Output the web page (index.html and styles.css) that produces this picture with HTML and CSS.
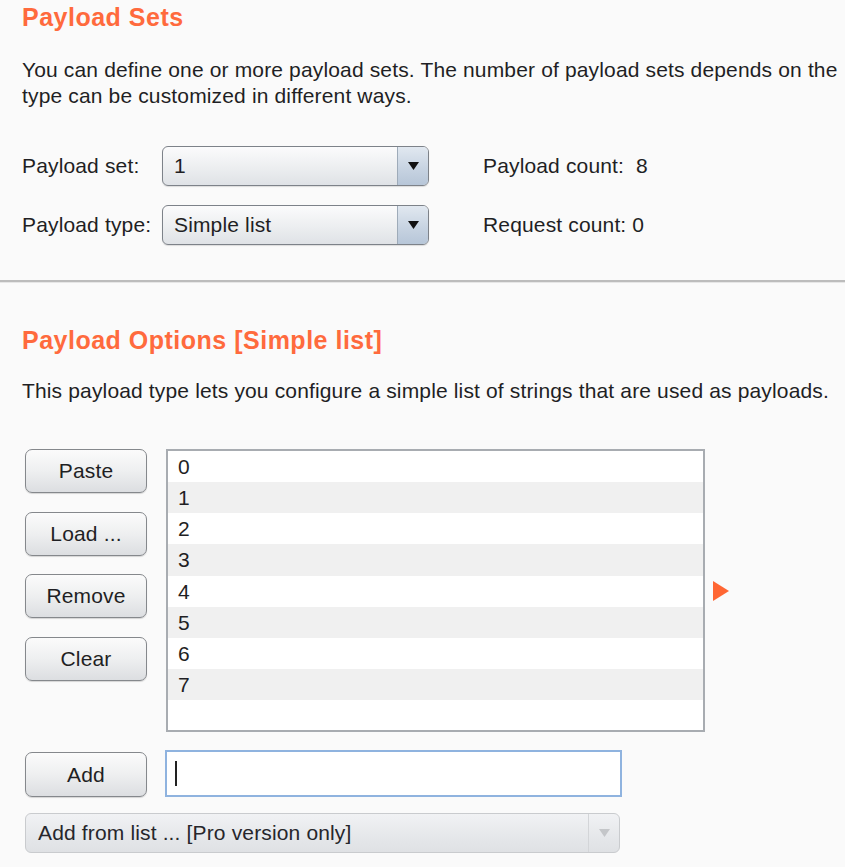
FILE: index.html
```html
<!DOCTYPE html>
<html>
<head>
<meta charset="utf-8">
<title>Payloads</title>
<link rel="stylesheet" href="styles.css">
</head>
<body>
<section class="sets">
  <h2 class="title">Payload Sets</h2>
  <div class="desc">
    <div class="line nowrap">You can define one or more payload sets. The number of payload sets depends on the</div>
    <div class="line">type can be customized in different ways.</div>
  </div>
  <div class="setgrid">
    <span class="lbl">Payload set:</span>
    <div class="combo"><span class="val">1</span><span class="arrow"><svg width="11" height="8" viewBox="0 0 11 8"><path d="M0 0H11L5.5 8Z" fill="#111"/></svg></span></div>
    <span class="info">Payload count:&nbsp; 8</span>
    <span class="lbl">Payload type:</span>
    <div class="combo"><span class="val">Simple list</span><span class="arrow"><svg width="11" height="8" viewBox="0 0 11 8"><path d="M0 0H11L5.5 8Z" fill="#111"/></svg></span></div>
    <span class="info">Request count: 0</span>
  </div>
</section>
<hr class="sep">
<section class="options">
  <h2 class="title">Payload Options [Simple list]</h2>
  <p class="desc1">This payload type lets you configure a simple list of strings that are used as payloads.</p>
  <div class="editor">
    <div class="btns">
      <button class="btn">Paste</button>
      <button class="btn">Load ...</button>
      <button class="btn">Remove</button>
      <button class="btn">Clear</button>
    </div>
    <div class="list">
      <div class="row">0</div>
      <div class="row">1</div>
      <div class="row">2</div>
      <div class="row">3</div>
      <div class="row">4</div>
      <div class="row">5</div>
      <div class="row">6</div>
      <div class="row">7</div>
    </div>
    <span class="marker"></span>
  </div>
  <div class="addrow">
    <button class="btn add">Add</button>
    <div class="input"><span class="caret"></span></div>
  </div>
  <div class="combo wide disabled"><span class="val">Add from list ... [Pro version only]</span><span class="arrow"><svg width="11" height="8" viewBox="0 0 11 8"><path d="M0 0H11L5.5 8Z" fill="#c4c6c9"/></svg></span></div>
</section>
</body>
</html>
```
FILE: styles.css
```css
* { box-sizing: border-box; }
html, body {
  margin: 0;
  padding: 0;
  overflow: hidden;
  background: #fafafa;
}
body {
  width: 845px;
  height: 867px;
  font-family: "Liberation Sans", Arial, sans-serif;
  font-size: 21px;
  color: #1f1f24;
  letter-spacing: 0.15px;
}
.title {
  margin: 2px 0 0 22px;
  font-size: 25px;
  line-height: 30px;
  font-weight: bold;
  color: #ff6a3d;
  letter-spacing: 0.5px;
}
.desc {
  margin: 25px 0 0 22px;
  line-height: 26px;
}
.nowrap { white-space: nowrap; }
.setgrid {
  margin: 37px 0 0 22px;
  display: grid;
  grid-template-columns: 140px 267px auto;
  grid-auto-rows: 40px;
  row-gap: 19px;
  align-items: center;
}
.info { margin-left: 54px; }
.combo {
  height: 40px;
  display: flex;
  align-items: stretch;
  border: 1.5px solid #7d8289;
  border-radius: 6px;
  background: linear-gradient(#fbfbfc, #eceef0 55%, #dfe2e6);
  box-shadow: 0 1px 1px rgba(0,0,0,0.12);
  overflow: hidden;
}
.combo .val {
  flex: 1;
  display: flex;
  align-items: center;
  padding-left: 11px;
  white-space: nowrap;
}
.combo .arrow {
  width: 31px;
  display: flex;
  align-items: center;
  justify-content: center;
  border-left: 1px solid #9eabb9;
  background: linear-gradient(#e1e8f0, #c8d4e2 55%, #b7c6d8);
}
.sep {
  margin: 35px 0 0 0;
  height: 2px;
  border: 0;
  background: #bcbcbc;
  box-shadow: 0 1px 0 #e6e6e6;
}
.options .title { margin-top: 43px; }
.desc1 {
  margin: 23px 0 0 22px;
  line-height: 26px;
}
.editor {
  margin: 45px 0 0 25px;
  display: flex;
  align-items: center;
}
.btns {
  align-self: flex-start;
  display: flex;
  flex-direction: column;
  gap: 18.5px;
}
.btn {
  width: 122px;
  height: 44px;
  padding: 0;
  font-family: inherit;
  font-size: 21px;
  letter-spacing: 0.15px;
  color: #1f1f24;
  border: 1.5px solid #85888c;
  border-radius: 7px;
  background: linear-gradient(#fbfbfb, #eeeff0 50%, #dcdee1);
  box-shadow: 0 1px 1px rgba(0,0,0,0.15);
}
.list {
  margin-left: 19px;
  width: 539px;
  height: 283px;
  border: 2px solid #a8acb1;
  background: #fff;
}
.row {
  height: 31.15px;
  line-height: 31px;
  padding-left: 10px;
}
.row:nth-child(even) { background: #f0f0f0; }
.marker {
  margin-left: 8px;
  width: 0;
  height: 0;
  border-left: 16px solid #ff6633;
  border-top: 10.5px solid transparent;
  border-bottom: 10.5px solid transparent;
}
.addrow {
  margin: 18px 0 0 25px;
  display: flex;
  align-items: flex-end;
  gap: 18px;
}
.btn.add { height: 45px; }
.input {
  width: 457px;
  height: 47px;
  border: 2px solid #8fb3df;
  background: #fff;
  display: flex;
  align-items: center;
  padding-left: 8px;
}
.caret {
  width: 2px;
  height: 25px;
  background: #222;
}
.combo.wide {
  margin: 16px 0 0 25px;
  width: 595px;
}
.combo.disabled {
  border: 1px solid #c9cbce;
  background: linear-gradient(#f1f2f4, #e6e8eb 55%, #dfe1e4);
  box-shadow: none;
}
.combo.disabled .val { padding-left: 12px; color: #26262b; }
.combo.disabled .arrow {
  background: transparent;
  border-left: 1px solid #d3d5d8;
}
```
